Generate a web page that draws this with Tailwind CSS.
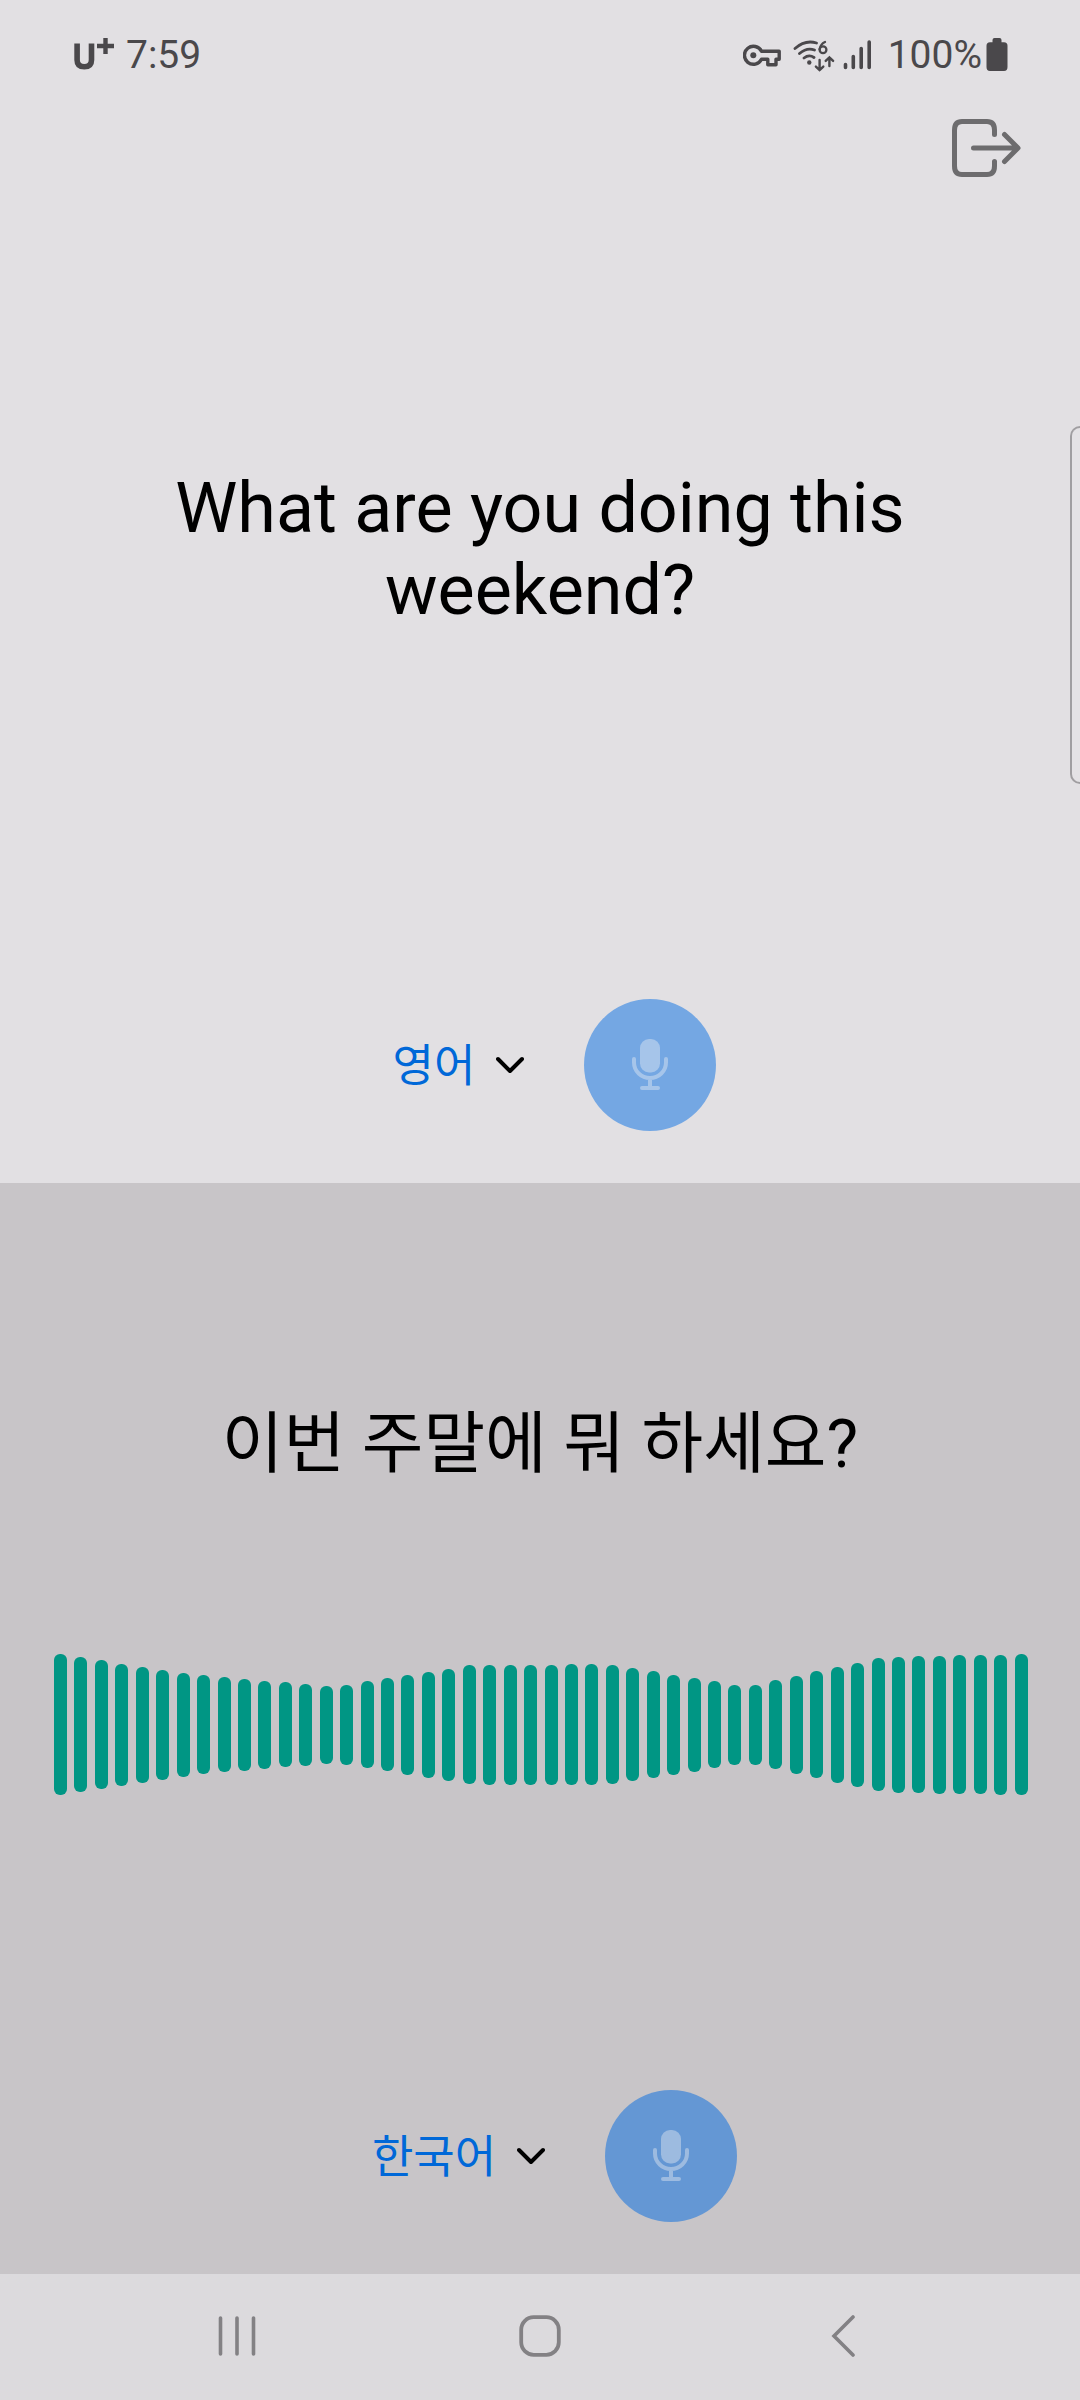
<!DOCTYPE html>
<html lang="ko">
<head>
<meta charset="utf-8">
<meta name="viewport" content="width=device-width, initial-scale=1">
<title>대화 모드</title>
<script src="https://cdn.jsdelivr.net/npm/@tailwindcss/browser@4"></script>
</head>
<body class="font-['Roboto','Noto_Sans_CJK_KR',sans-serif] text-black">
<div class="relative flex min-h-screen flex-col bg-[#e2e0e3]">

  <header class="flex h-[92px] items-center justify-between pt-[18px] pr-[72px] pl-[74px] text-[39px] leading-[46px] text-[#4a484b]">
    <div class="flex items-center gap-3">
      <svg class="h-[34px] w-[40px]" viewBox="0 0 40 34" fill="none" stroke="currentColor" aria-label="U+">
        <path d="M3.1 5.500v16.500q0 6.700 7.200 6.700t7.200-6.700V5.500" stroke-width="5.600"/>
        <path d="M31.500 0v16M23 8h17" stroke-width="4.400"/>
      </svg>
      <span>7:59</span>
    </div>
    <div class="flex items-center">
      <svg class="h-[34px] w-[38px]" viewBox="0 0 38 34" fill="none" stroke="currentColor" aria-label="VPN">
        <path d="M18.500 13.300h17.700v8h-3.200v5.500h-8.200v-5.500h-6.300a9 9 0 1 1 0-8z" stroke-width="3.400" stroke-linejoin="round"/>
        <circle cx="10.300" cy="17.300" r="3" fill="currentColor" stroke="none"/>
      </svg>
      <svg class="ml-3 h-[34px] w-[42px]" viewBox="0 0 42 34" fill="none" stroke="currentColor" stroke-width="2.800" stroke-linecap="round" aria-label="Wi-Fi 6">
        <path d="M2 10.500Q12 1.500 23.500 5M6.500 15.500Q14 9 21.500 12M11 20Q16 16 21 19.500"/>
        <circle cx="16.300" cy="24.500" r="2.200" fill="currentColor" stroke="none"/>
        <path d="M32 4q-4.500 2-5.400 7.200" stroke-width="2.300"/>
        <circle cx="30" cy="11.800" r="3.400" stroke-width="2.300"/>
        <path d="M26.600 22v10M22.900 28.600l3.700 3.600 3.700-3.600M36.400 28v-8.500M32.700 22.900l3.700-3.600 3.700 3.600" stroke-width="2.400"/>
      </svg>
      <svg class="ml-2 h-[34px] w-[29px]" viewBox="0 0 29 34" fill="none" stroke="currentColor" stroke-width="3.600" stroke-linecap="round" aria-label="신호">
        <path d="M2.500 26.500v3M10.300 18.500v11M18.200 10.500v19M26.200 4v25.500"/>
      </svg>
      <span class="ml-4">100%</span>
      <svg class="ml-1 h-[34px] w-[22px]" viewBox="0 0 22 34" fill="currentColor" aria-label="배터리">
        <path d="M8.500 0h5q2 0 2 2v2.300H18q3.500 0 3.500 3.500v21.200q0 4-3.500 4H4q-3.500 0-3.500-4V7.800q0-3.500 3.500-3.500h2.500V2q0-2 2-2z"/>
      </svg>
    </div>
  </header>

  <main class="grid flex-1 auto-rows-fr grid-cols-1">
    <section class="flex flex-col pb-[52px]">
      <div class="flex justify-end pt-[27px] pr-[59px]">
        <button type="button" aria-label="나가기" class="text-[#6d6c6e]">
          <svg class="h-[58px] w-[69px]" viewBox="0 0 69 58" fill="none" stroke="currentColor" stroke-width="5" stroke-linecap="round" stroke-linejoin="round">
            <path d="M42.500 15.500V11q0-8.500-7.500-8.500H10Q2.500 2.500 2.500 11v36q0 8.500 7.500 8.500h25q7.500 0 7.500-8.500v-4.500M21.500 29H65M52.500 15.500L66 29 52.500 42.500"/>
          </svg>
        </button>
      </div>
      <div class="flex flex-1 items-center justify-center px-[108px] pb-[78px]">
        <p lang="en" class="text-center text-[70px] leading-[82px]">What are you doing this weekend?</p>
      </div>
      <div class="flex items-center justify-center gap-9">
        <div class="relative flex items-center">
          <select aria-label="상대방 언어" class="field-sizing-content appearance-none bg-transparent pt-1 pr-[73px] pl-[29px] text-[45px] leading-[60px] text-[#0068d8]">
            <option selected>영어</option>
            <option>한국어</option>
          </select>
          <svg class="pointer-events-none absolute right-6 h-[18px] w-[28px]" viewBox="0 0 28 18" fill="none" stroke="#000" stroke-width="4" stroke-linecap="round" stroke-linejoin="round"><path d="M2 3l12 12L26 3"/></svg>
        </div>
        <button type="button" aria-label="영어로 말하기" class="flex size-[132px] items-center justify-center rounded-full bg-[#74a7e3] text-[#a6c5ea]">
          <svg class="h-[52px] w-[36px]" viewBox="0 0 36 52" fill="none" stroke="currentColor" stroke-width="4" stroke-linecap="round">
            <rect x="8" y="0" width="20" height="33.500" rx="9" fill="currentColor" stroke="none"/>
            <path d="M2 20v3.500a16 15.500 0 0 0 32 0V20M18 40v8M10 49h16"/>
          </svg>
        </button>
      </div>
    </section>

    <section class="flex flex-col bg-[#c8c5c8] pb-[52px]">
      <p class="px-[108px] pt-[220px] text-center text-[67px] leading-[82px]">이번 주말에 뭐 하세요?</p>
      <div id="wave" class="mr-[52px] ml-[54px] mt-[169px] flex h-[141px] items-center justify-between" role="img" aria-label="음성 파형"></div>
      <div class="mt-auto flex items-center justify-center gap-9">
        <div class="relative flex items-center">
          <select aria-label="내 언어" class="field-sizing-content appearance-none bg-transparent pt-1 pr-[73px] pl-[29px] text-[45px] leading-[60px] text-[#0068d8]">
            <option selected>한국어</option>
            <option>영어</option>
          </select>
          <svg class="pointer-events-none absolute right-6 h-[18px] w-[28px]" viewBox="0 0 28 18" fill="none" stroke="#000" stroke-width="4" stroke-linecap="round" stroke-linejoin="round"><path d="M2 3l12 12L26 3"/></svg>
        </div>
        <button type="button" aria-label="한국어로 말하기" class="flex size-[132px] items-center justify-center rounded-full bg-[#6497d4] text-[#9dbbe0]">
          <svg class="h-[52px] w-[36px]" viewBox="0 0 36 52" fill="none" stroke="currentColor" stroke-width="4" stroke-linecap="round">
            <rect x="8" y="0" width="20" height="33.500" rx="9" fill="currentColor" stroke="none"/>
            <path d="M2 20v3.500a16 15.500 0 0 0 32 0V20M18 40v8M10 49h16"/>
          </svg>
        </button>
      </div>
    </section>
  </main>

  <nav class="grid h-[126px] grid-cols-3 items-center justify-items-center bg-[#dcdadd] pr-[86px] pb-[2px] pl-[85px] text-[#838184]">
    <button type="button" aria-label="최근 앱">
      <svg class="h-[42px] w-[38px]" viewBox="0 0 38 42" fill="none" stroke="currentColor" stroke-width="3.600" stroke-linecap="round"><path d="M2.500 3v36M19 3v36M35.500 3v36"/></svg>
    </button>
    <button type="button" aria-label="홈">
      <svg class="h-[42px] w-[42px]" viewBox="0 0 42 42" fill="none" stroke="currentColor" stroke-width="3.800"><rect x="2.200" y="2.200" width="37.600" height="37.600" rx="12.500"/></svg>
    </button>
    <button type="button" aria-label="뒤로">
      <svg class="h-[42px] w-[24px]" viewBox="0 0 24 42" fill="none" stroke="currentColor" stroke-width="3.600" stroke-linecap="round"><path d="M22 2L3 21l19 19"/></svg>
    </button>
  </nav>

  <!-- edge panel handle -->
  <div class="absolute top-[426px] right-0 h-[358px] w-[10px] rounded-l-[12px] border-2 border-r-0 border-[#a09ea1] bg-[#e4e2e5]"></div>
</div>
<script>
  const levels = [141,135,129,122,116,110,104,99,95,92,88,85,82,78,80,87,93,100,106,112,119,120,120,120,
    120,121,121,119,113,107,100,94,87,80,80,89,98,107,116,124,133,136,137,138,139,139,140,141];
  const wave = document.getElementById('wave');
  for (const level of levels) {
    const bar = document.createElement('div');
    bar.className = 'w-[13px] rounded-[6px] bg-[#009684]';
    bar.style.height = level + 'px';
    wave.append(bar);
  }
</script>
</body>
</html>
